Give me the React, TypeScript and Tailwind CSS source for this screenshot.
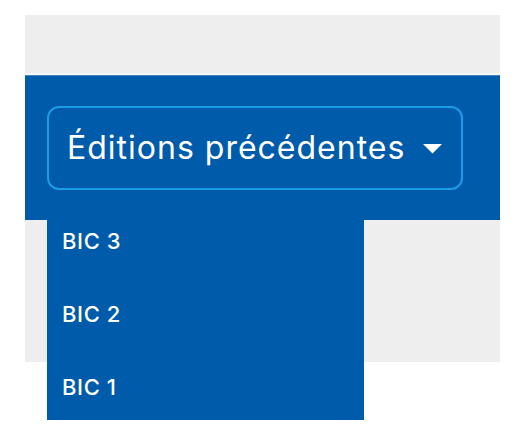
const editions = ["BIC 3", "BIC 2", "BIC 1"];

export default function App() {
  return (
    <div
      className="w-[523px] h-[436px] bg-white pt-[15px] pl-[25px]"
      style={{ fontFamily: "Inter, 'Open Sans', sans-serif" }}
    >
      <div className="w-[475px] bg-[#eeeeee]">
        <div className="h-[58px]" />
        <div className="h-[2px] bg-[#f8f7f1]" />
        {/* Blue band */}
        <div className="h-[145px] bg-[#005baa] border-t border-[#3f86c8] px-[22px] pt-[30px]">
          <div className="relative w-[416px]">
            <button className="flex h-[84px] w-full items-center justify-between rounded-[12px] border-2 border-[#1d9be6] pl-[18px] pr-[19px] text-[32px] text-white">
              <span className="tracking-[1px]">Éditions précédentes</span>
              <svg width="19" height="10" viewBox="0 0 19 10" className="mt-[1px]">
                <path d="M0 0 H19 L9.5 9.5 Z" fill="white" />
              </svg>
            </button>
            {/* Dropdown */}
            <ul className="absolute left-0 top-full z-10 mt-[14px] h-[216px] w-[317px] overflow-hidden bg-[#005baa]">
              {editions.map((e) => (
                <li
                  key={e}
                  className="flex h-[73px] items-center pl-[15px] text-[22px] font-medium leading-none tracking-[0.6px] text-white"
                >
                  {e}
                </li>
              ))}
            </ul>
          </div>
        </div>
        <div className="h-[142px]" />
      </div>
    </div>
  );
}
